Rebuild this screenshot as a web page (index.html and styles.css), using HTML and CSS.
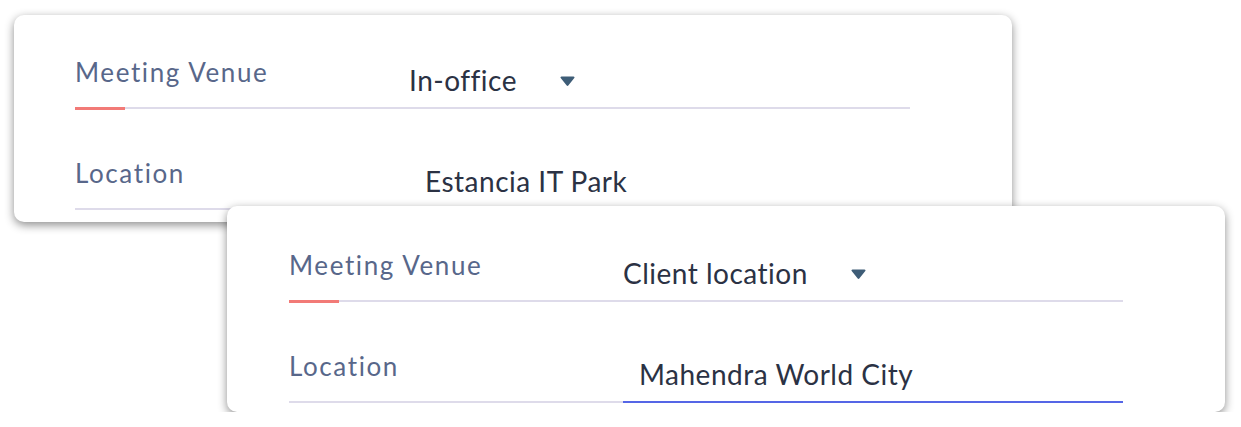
FILE: index.html
```html
<!DOCTYPE html>
<html lang="en">
<head>
    <meta charset="UTF-8">
    <meta name="viewport" content="width=device-width, initial-scale=1.0">
    <title>Meeting Venue</title>
    <link rel="stylesheet" href="styles.css">
</head>
<body>
    <div class="stage">
        <div class="card">
            <div class="row">
                <div class="label accent">Meeting Venue</div>
                <div class="field">
                    <span class="value">In-office</span>
                    <svg class="caret" width="15" height="10" viewBox="0 0 15 10">
                        <path d="M1.5 0.5h12a1 1 0 0 1 0.8 1.6l-5.8 7.2a1.3 1.3 0 0 1-2 0l-5.8-7.2a1 1 0 0 1 0.8-1.6z" fill="#3e5d77"/>
                    </svg>
                </div>
            </div>
            <div class="row">
                <div class="label">Location</div>
                <div class="field input">
                    <span class="value">Estancia IT Park</span>
                </div>
            </div>
        </div>

        <div class="card front">
            <div class="row">
                <div class="label accent">Meeting Venue</div>
                <div class="field">
                    <span class="value">Client location</span>
                    <svg class="caret" width="15" height="10" viewBox="0 0 15 10">
                        <path d="M1.5 0.5h12a1 1 0 0 1 0.8 1.6l-5.8 7.2a1.3 1.3 0 0 1-2 0l-5.8-7.2a1 1 0 0 1 0.8-1.6z" fill="#3e5d77"/>
                    </svg>
                </div>
            </div>
            <div class="row">
                <div class="label">Location</div>
                <div class="field input focused">
                    <span class="value">Mahendra World City</span>
                </div>
            </div>
        </div>
    </div>
</body>
</html>
```

FILE: styles.css
```css
* {
    box-sizing: border-box;
}
body {
    font-family: 'Lato', sans-serif;
    margin: 0;
    padding: 0;
    background: white;
    color: #2b3244;
}
.stage {
    padding: 15px 0 0 14px;
}
.card {
    width: 998px;
    background: white;
    border-radius: 10px;
    box-shadow: 0 3px 10px rgba(0, 0, 0, 0.45);
    padding: 0 102px 12px 61px;
    display: flex;
    flex-direction: column;
    gap: 7px;
}
.card.front {
    position: relative;
    margin: -16px 0 0 213px;
    padding: 2px 102px 9px 62px;
}
.row {
    display: flex;
    height: 94px;
}
.label {
    width: 334px;
    display: flex;
    align-items: flex-end;
    padding-bottom: 22px;
    border-bottom: 2px solid #dedbea;
    font-size: 26px;
    line-height: 1;
    letter-spacing: 1.6px;
    color: #58678a;
    position: relative;
}
.label.accent::after {
    content: '';
    position: absolute;
    left: 0;
    bottom: -3px;
    width: 50px;
    height: 3px;
    background: #f27a77;
}
.field {
    flex: 1;
    display: flex;
    align-items: flex-end;
    padding-bottom: 13px;
    border-bottom: 2px solid #dedbea;
}
.field.input {
    padding-left: 16px;
}
.field.focused {
    border-bottom-color: #5566e6;
}
.value {
    font-size: 28px;
    line-height: 1;
    letter-spacing: 0.5px;
    color: #2b3244;
}
.caret {
    margin: 0 0 8px 43px;
}
```
